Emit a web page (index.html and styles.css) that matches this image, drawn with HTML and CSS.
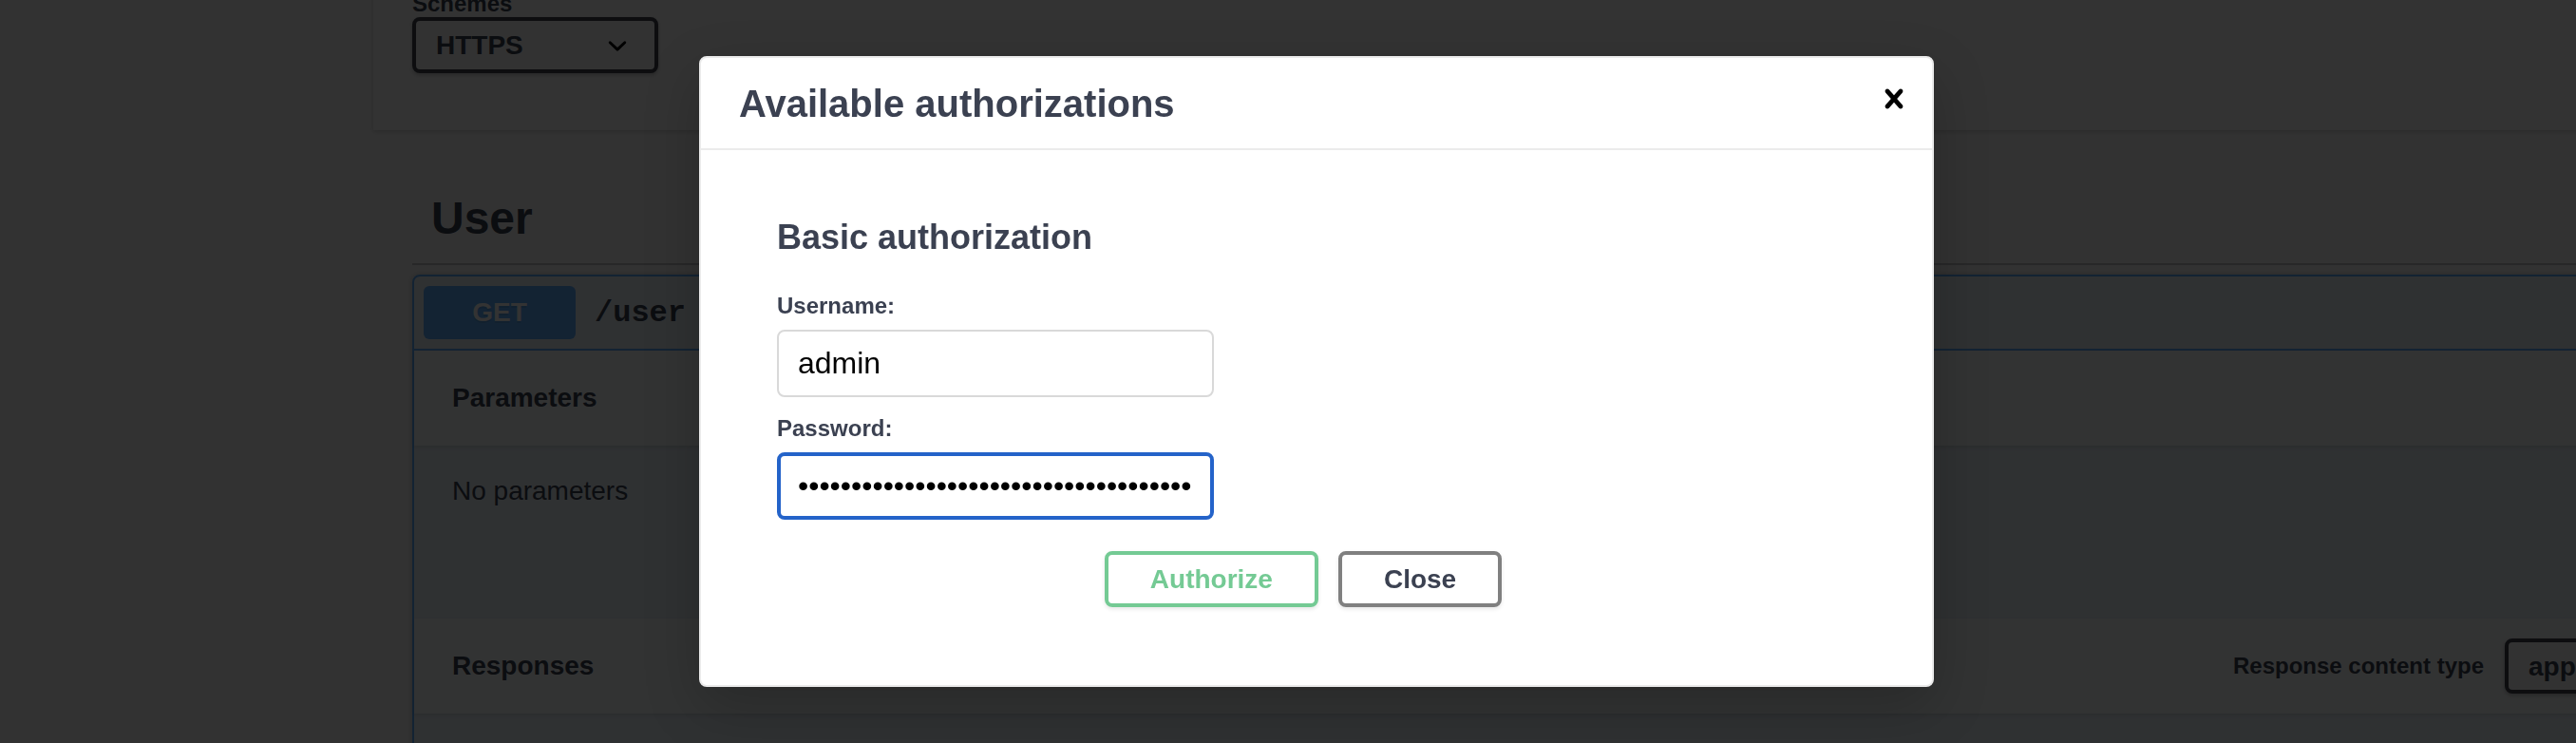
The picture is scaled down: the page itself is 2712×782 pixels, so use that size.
FILE: index.html
```html
<!DOCTYPE html>
<html lang="en">
<head>
<meta charset="utf-8">
<title>Available authorizations</title>
<link rel="stylesheet" href="styles.css">
</head>
<body>
  <div class="page">
    <div class="scheme-panel">
      <div class="schemes-title">Schemes</div>
      <div class="select scheme-select">
        <span>HTTPS</span>
        <svg class="chevron" viewBox="0 0 20 20" width="40" height="40"><path d="M13.418 7.859a.695.695 0 01.978 0 .68.68 0 010 .969l-3.908 3.83a.697.697 0 01-.979 0l-3.908-3.83a.68.68 0 010-.969.695.695 0 01.978 0L10 11l3.418-3.141z"/></svg>
      </div>
    </div>

    <section class="tag-section">
      <h3 class="tag-title">User</h3>
      <div class="opblock">
        <div class="summary">
          <span class="method">GET</span>
          <span class="path">/user</span>
        </div>
        <div class="section-header"><h4>Parameters</h4></div>
        <div class="params-body"><p>No parameters</p></div>
        <div class="section-header">
          <h4>Responses</h4>
          <span class="ctype-label">Response content type</span>
          <div class="select ctype-select">
            <span>application/json</span>
            <svg class="chevron" viewBox="0 0 20 20" width="40" height="40"><path d="M13.418 7.859a.695.695 0 01.978 0 .68.68 0 010 .969l-3.908 3.83a.697.697 0 01-.979 0l-3.908-3.83a.68.68 0 010-.969.695.695 0 01.978 0L10 11l3.418-3.141z"/></svg>
          </div>
        </div>
        <div class="responses-body"></div>
      </div>
    </section>
  </div>

  <div class="backdrop"></div>

  <div class="modal">
    <div class="modal-header">
      <h3>Available authorizations</h3>
      <button class="close-modal" type="button" aria-label="Close">
        <svg viewBox="0 0 20 20" width="40" height="40"><path d="M14.348 14.849c-.469.469-1.229.469-1.697 0L10 11.819l-2.651 3.029c-.469.469-1.229.469-1.697 0-.469-.469-.469-1.229 0-1.697l2.758-3.15-2.759-3.152c-.469-.469-.469-1.228 0-1.697.469-.469 1.228-.469 1.697 0L10 8.183l2.651-3.031c.469-.469 1.228-.469 1.697 0 .469.469.469 1.229 0 1.697l-2.758 3.152 2.758 3.15c.469.469.469 1.229 0 1.698z"/></svg>
      </button>
    </div>
    <div class="modal-content">
      <div class="auth-container">
        <h4>Basic authorization</h4>
        <div class="field first">
          <label for="username">Username:</label>
          <input id="username" type="text" value="admin">
        </div>
        <div class="field">
          <label for="password">Password:</label>
          <input id="password" class="is-focused" type="password" value="aaaaaaaaaaaaaaaaaaaaaaaaaaaaaaaaaaaaa">
        </div>
        <div class="btn-wrapper">
          <button class="btn authorize" type="button">Authorize</button>
          <button class="btn" type="button">Close</button>
        </div>
      </div>
    </div>
  </div>
</body>
</html>
```

FILE: styles.css
```css
* {
  box-sizing: border-box;
}

html,
body {
  margin: 0;
  overflow: hidden;
}

body {
  position: relative;
  width: 2712px;
  height: 782px;
  background: #fafafa;
  font-family: "Liberation Sans", Arial, sans-serif;
  color: #3b4151;
}

/* ---------- background page ---------- */
.page {
  margin-top: -70px;
}

.scheme-panel {
  margin-left: 393px;
  width: 2648px;
  padding: 60px 41px;
  background: #fff;
  box-shadow: 0 2px 4px rgba(0, 0, 0, 0.15);
}

.schemes-title {
  font-size: 24px;
  font-weight: 700;
  line-height: 28px;
}

.select {
  display: flex;
  align-items: center;
  justify-content: space-between;
  height: 59px;
  padding: 0 19px 0 21px;
  border: 4px solid #41444e;
  border-radius: 8px;
  background: #f7f7f7;
  box-shadow: 0 2px 4px rgba(0, 0, 0, 0.25);
  font-size: 28px;
  font-weight: 700;
  line-height: 31px;
  white-space: nowrap;
}

.chevron {
  display: block;
  flex: none;
  margin: 0 0 0 10px;
}

.scheme-select {
  width: 259px;
}

.tag-section {
  margin: 45px 0 0 434px;
  width: 2566px;
}

.tag-title {
  margin: 0 0 10px;
  padding: 20px 40px 20px 20px;
  border-bottom: 2px solid rgba(59, 65, 81, 0.3);
  font-size: 48px;
  line-height: 55px;
  font-weight: 700;
}

.opblock {
  border: 2px solid #61affe;
  border-radius: 8px;
  background: rgba(97, 175, 254, 0.1);
  box-shadow: 0 0 6px rgba(0, 0, 0, 0.19);
}

.summary {
  display: flex;
  align-items: center;
  padding: 10px;
  border-bottom: 2px solid #61affe;
}

.method {
  min-width: 160px;
  padding: 12px 0;
  border-radius: 6px;
  background: #61affe;
  color: #fff;
  font-size: 28px;
  font-weight: 700;
  line-height: 32px;
  text-align: center;
  text-shadow: 0 2px 0 rgba(0, 0, 0, 0.1);
}

.path {
  padding: 0 20px;
  font-family: "Liberation Mono", "Courier New", monospace;
  font-size: 32px;
  font-weight: 700;
}

.section-header {
  display: flex;
  align-items: center;
  height: 100px;
  padding: 0 40px;
  background: rgba(255, 255, 255, 0.8);
  box-shadow: 0 2px 4px rgba(0, 0, 0, 0.1);
}

.section-header h4 {
  margin: 0;
  font-size: 28px;
  line-height: 32px;
  font-weight: 700;
}

.params-body {
  padding: 32px 40px 118px;
}

.params-body p {
  margin: 0;
  font-size: 28px;
  line-height: 32px;
}

.ctype-label {
  margin-left: auto;
  margin-right: 22px;
  font-size: 24px;
  font-weight: 700;
}

.ctype-select {
  width: 321px;
  height: 58px;
}

.responses-body {
  height: 120px;
}

/* ---------- overlay + modal ---------- */
.backdrop {
  position: fixed;
  inset: 0;
  background: rgba(0, 0, 0, 0.8);
}

.modal {
  position: absolute;
  left: 736px;
  top: 59px;
  width: 1300px;
  background: #fff;
  border: 2px solid #ebebeb;
  border-radius: 8px;
  box-shadow: 0 20px 60px rgba(0, 0, 0, 0.2);
}

.modal-header {
  display: flex;
  align-items: center;
  min-height: 97px;
  border-bottom: 2px solid #ebebeb;
}

.modal-header h3 {
  flex: 1;
  margin: 0;
  padding: 0 40px;
  font-size: 40px;
  line-height: 46px;
  font-weight: 700;
  color: #3b4151;
}

.close-modal {
  padding: 0 20px 9px;
  border: 0;
  background: none;
  cursor: pointer;
}

.close-modal svg {
  display: block;
  fill: #000;
}

.modal-content {
  padding: 40px;
}

.auth-container {
  padding: 20px 40px 42px;
}

.auth-container h4 {
  margin: 11px 0 0;
  font-size: 36px;
  line-height: 42px;
  font-weight: 700;
  color: #3b4151;
}

.field {
  margin-top: 18px;
}

.field.first {
  margin-top: 36px;
}

.field label {
  display: block;
  font-size: 24px;
  line-height: 30px;
  font-weight: 700;
  color: #3b4151;
}

.field input {
  display: block;
  width: 460px;
  height: 71px;
  margin-top: 10px;
  padding: 0 20px;
  border: 2px solid #d9d9d9;
  border-radius: 8px;
  background: #fff;
  font-family: "Liberation Sans", Arial, sans-serif;
  font-size: 32px;
  color: #000;
  outline: none;
}

.field input.is-focused {
  padding: 0 18px;
  border: 4px solid #2463c9;
}

.btn-wrapper {
  display: flex;
  justify-content: center;
  gap: 21px;
  margin-top: 33px;
  padding-right: 28px;
}

.btn {
  padding: 10px 44px;
  border: 4px solid #808080;
  border-radius: 8px;
  background: transparent;
  box-shadow: 0 2px 4px rgba(0, 0, 0, 0.1);
  font-family: "Liberation Sans", Arial, sans-serif;
  font-size: 28px;
  line-height: 31px;
  font-weight: 700;
  color: #3b4151;
  cursor: pointer;
}

.btn.authorize {
  border-color: #74ca94;
  color: #74ca94;
}
```
